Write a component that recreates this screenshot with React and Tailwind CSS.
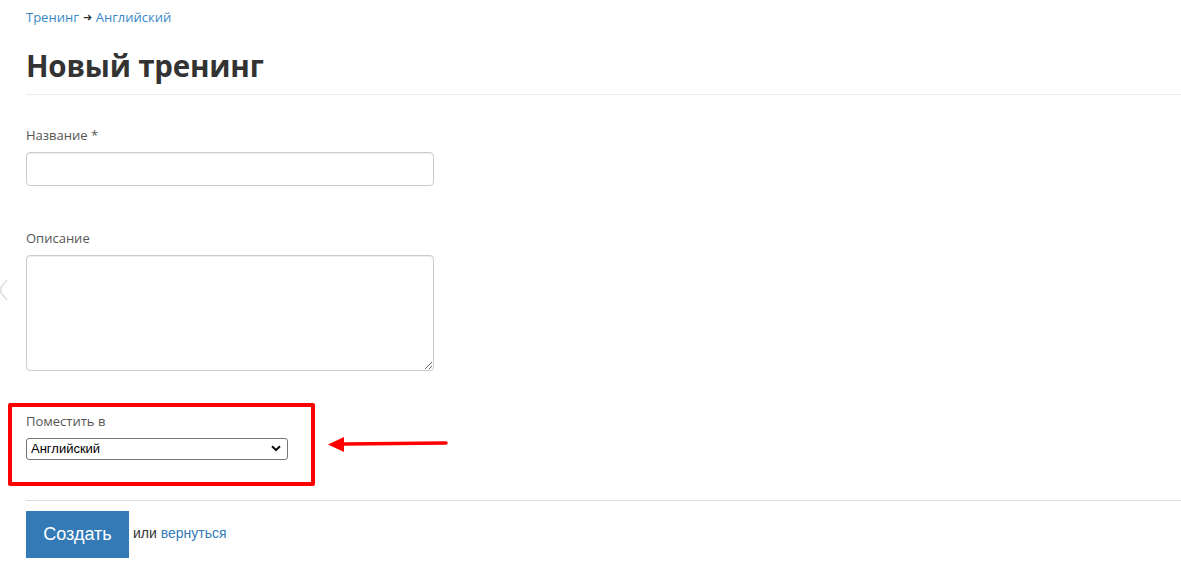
import React from 'react';

const Label = ({ children }) => (
  <label className="block text-[13px] leading-[18px] text-[#555] font-['Open_Sans',sans-serif] mb-[8px]">
    {children}
  </label>
);

const App = () => {
  return (
    <div className="relative min-h-[573px] bg-white font-['Liberation_Sans',Arial,sans-serif] text-[#333]">
      {/* side toggle peeking from the left edge */}
      <svg className="absolute left-0 top-[279px]" width="8" height="22" viewBox="0 0 8 22">
        <path d="M7 1 L1 8 L1 14 L7 21" fill="none" stroke="#dcdcdc" strokeWidth="1.5" />
      </svg>

      <div className="pl-[26px] pt-[8px]">
        {/* Breadcrumb */}
        <div className="flex items-center gap-[4px] text-[13px] leading-[18px] font-['Open_Sans',sans-serif]">
          <a href="#" className="text-[#3a87c5]">Тренинг</a>
          <span className="text-[#333] text-[11px]">➜</span>
          <a href="#" className="text-[#3a87c5]">Английский</a>
        </div>

        {/* Title */}
        <h1 className="mt-[22px] mb-[10px] text-[29.5px] leading-[36px] font-bold text-[#333] font-['Open_Sans',sans-serif] tracking-[-0.2px]">
          Новый тренинг
        </h1>
        <div className="border-t border-[#eee]" />

        {/* Form */}
        <div className="mt-[31px] w-[408px]">
          <Label>Название *</Label>
          <input
            type="text"
            className="block w-full h-[34px] border border-[#ccc] rounded-[4px] px-3 shadow-[inset_0_1px_1px_rgba(0,0,0,0.075)]"
          />
        </div>

        <div className="mt-[43px] w-[408px]">
          <Label>Описание</Label>
          <textarea className="block w-full h-[116px] border border-[#ccc] rounded-[4px] px-3 py-2 shadow-[inset_0_1px_1px_rgba(0,0,0,0.075)]" />
        </div>

        <div className="mt-[41px] w-[262px]">
          <Label>Поместить в</Label>
          <div className="relative">
            <select className="block w-full h-[22px] appearance-none border border-[#767676] rounded-[3px] pl-[4px] text-[13px] text-black bg-white">
              <option>Английский</option>
            </select>
            <svg className="absolute right-[7px] top-[7px] pointer-events-none" width="10" height="7" viewBox="0 0 10 7">
              <path d="M1 1.2 L5 5 L9 1.2" fill="none" stroke="#111" strokeWidth="2" />
            </svg>
          </div>
        </div>

        <div className="mt-[40px] border-t border-[#ddd]" />

        <div className="mt-[10px] flex items-center">
          <button className="w-[103px] h-[47px] bg-[#337ab7] text-white text-[18px] font-['Liberation_Sans',Arial,sans-serif]">
            Создать
          </button>
          <span className="ml-[4px] mb-[3px] text-[14px] text-[#333]">
            или <a href="#" className="text-[#337ab7]">вернуться</a>
          </span>
        </div>
      </div>

      {/* annotation: red frame and arrow */}
      <div className="absolute left-[8px] top-[403px] w-[307px] h-[83px] border-[4px] border-[#f00] rounded-[2px] pointer-events-none" />
      <svg className="absolute left-[326px] top-[435px] pointer-events-none" width="124" height="20" viewBox="0 0 124 20">
        <path d="M18 9 L120 8" stroke="#f00" strokeWidth="3.5" strokeLinecap="round" />
        <path d="M2 9.5 L18 2 L18 17 Z" fill="#f00" />
      </svg>
    </div>
  );
};

export default App;
